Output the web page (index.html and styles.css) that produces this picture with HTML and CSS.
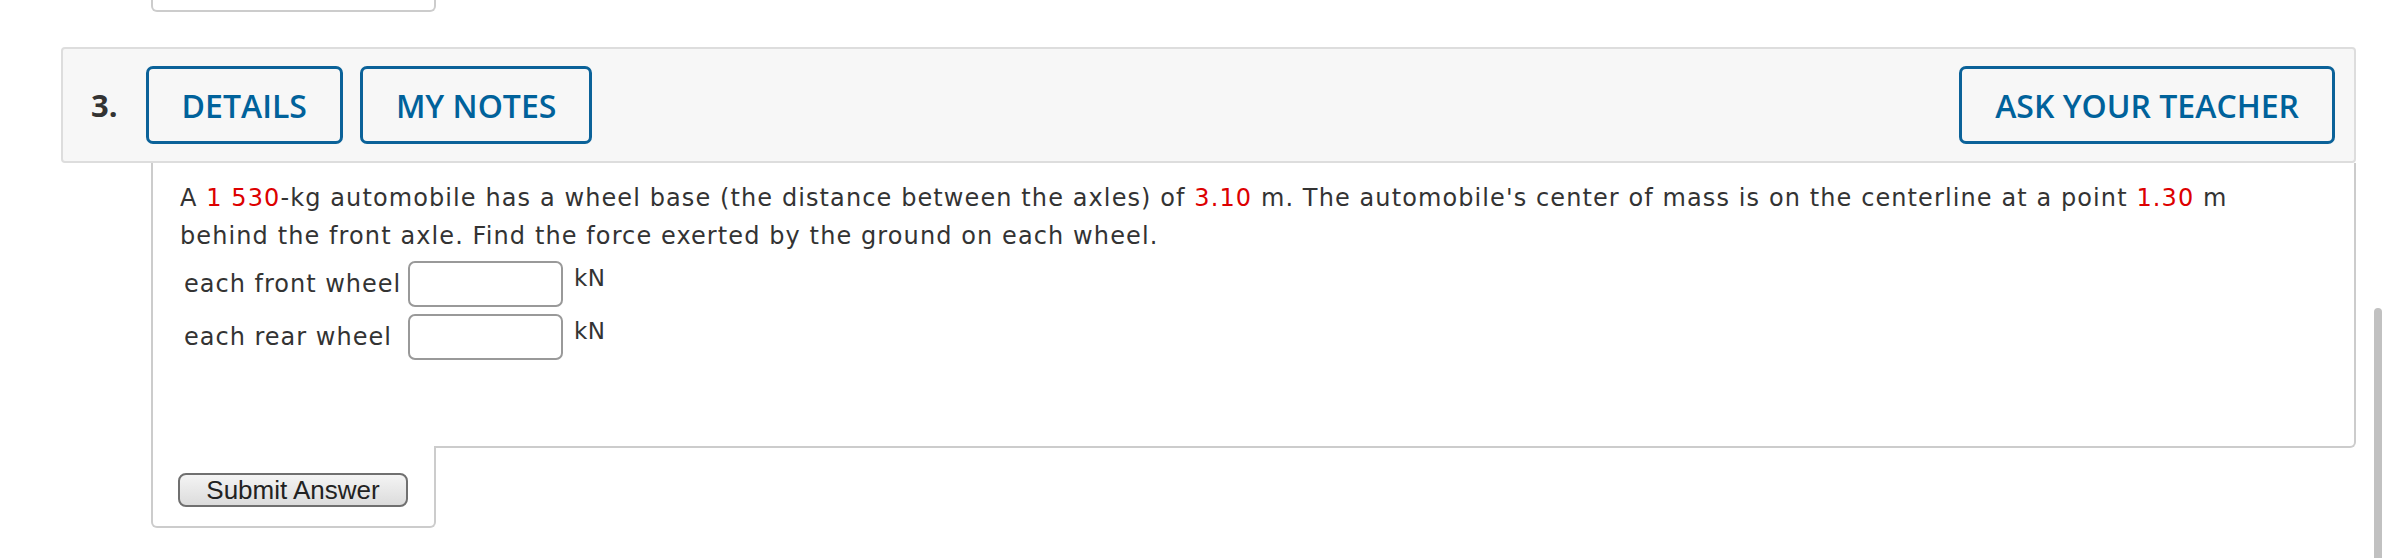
FILE: index.html
```html
<!DOCTYPE html>
<html>
<head>
<meta charset="utf-8">
<link rel="stylesheet" href="styles.css">
</head>
<body>
<div class="prev-stub"></div>
<div class="question">
  <div class="q-header">
    <span class="q-num">3.</span>
    <button class="btn">DETAILS</button>
    <button class="btn">MY NOTES</button>
    <span class="spacer"></span>
    <button class="btn btn-last">ASK YOUR TEACHER</button>
  </div>
  <div class="q-body">
    <p class="q-text">A <span class="red">1 530</span>-kg automobile has a wheel base (the distance between the axles) of <span class="red">3.10</span> m. The automobile's center of mass is on the centerline at a point <span class="red">1.30</span> m behind the front axle. Find the force exerted by the ground on each wheel.</p>
    <div class="answers">
      <div class="row"><span class="lbl">each front wheel</span><input class="ans" type="text"><span class="unit">kN</span></div>
      <div class="row"><span class="lbl">each rear wheel</span><input class="ans" type="text"><span class="unit">kN</span></div>
    </div>
  </div>
  <div class="submit-box"><button class="submit">Submit Answer</button></div>
</div>
<div class="scrollbar"></div>
</body>
</html>
```
FILE: styles.css
```css
html, body {
  margin: 0;
  padding: 0;
  background: #ffffff;
}
body {
  font-family: "DejaVu Sans", Verdana, sans-serif;
  color: #333333;
  width: 2388px;
  height: 558px;
  overflow: hidden;
}
.prev-stub {
  box-sizing: border-box;
  margin-left: 151px;
  width: 285px;
  height: 12px;
  border: 2px solid #cccccc;
  border-top: none;
  border-radius: 0 0 6px 6px;
}
.question {
  margin-left: 61px;
  margin-top: 35px;
  width: 2295px;
}
.q-header {
  box-sizing: border-box;
  display: flex;
  align-items: center;
  height: 116px;
  padding: 0 19px 0 28px;
  background: #f7f7f7;
  border: 2px solid #dddddd;
  border-radius: 4px;
}
.q-num {
  font-family: "Open Sans", sans-serif;
  font-weight: 700;
  font-size: 31px;
  color: #333333;
  margin-right: 28px;
}
.btn {
  box-sizing: border-box;
  height: 78px;
  padding: 0 33px;
  margin-right: 17px;
  background: transparent;
  border: 3px solid #0b6299;
  border-radius: 7px;
  font-family: "Open Sans", sans-serif;
  font-weight: 600;
  font-size: 32px;
  color: #00629b;
}
.btn-last {
  margin-right: 0;
}
.spacer {
  flex: 1;
}
.q-body {
  box-sizing: border-box;
  margin-left: 90px;
  height: 285px;
  border: 2px solid #cccccc;
  border-top: none;
  border-radius: 0 0 6px 0;
  padding: 16px 40px 0 27px;
}
.q-text {
  margin: 0;
  font-size: 24px;
  letter-spacing: 1.1px;
  line-height: 38px;
  color: #333333;
}
.red {
  color: #dd0000;
}
.answers {
  margin-top: 6px;
  display: flex;
  flex-direction: column;
  gap: 7px;
}
.row {
  display: flex;
  align-items: flex-start;
}
.lbl {
  flex: none;
  font-size: 24px;
  letter-spacing: 1px;
  line-height: 46px;
  padding-left: 4px;
  width: 224px;
  color: #333333;
}
.ans {
  flex: none;
  box-sizing: border-box;
  width: 155px;
  height: 46px;
  border: 2px solid #999999;
  border-radius: 7px;
  background: #ffffff;
  margin: 0;
}
.unit {
  font-size: 23px;
  letter-spacing: 0.5px;
  line-height: 34px;
  margin-left: 11px;
  color: #333333;
}
.submit-box {
  box-sizing: border-box;
  margin-left: 90px;
  margin-top: -2px;
  width: 285px;
  height: 82px;
  background: #ffffff;
  border: 2px solid #cccccc;
  border-top: none;
  border-radius: 0 0 6px 6px;
  padding: 27px 0 0 25px;
}
.submit {
  box-sizing: border-box;
  width: 230px;
  height: 34px;
  padding: 0;
  border: 2px solid #707070;
  border-radius: 8px;
  background: linear-gradient(#f4f4f4, #dcdcdc);
  font-family: "Liberation Sans", Arial, sans-serif;
  font-size: 26px;
  line-height: 30px;
  color: #222222;
}
.scrollbar {
  position: fixed;
  right: 6px;
  top: 308px;
  bottom: 0;
  width: 8px;
  background: #c1c1c1;
  border-radius: 4px 4px 0 0;
}
```
